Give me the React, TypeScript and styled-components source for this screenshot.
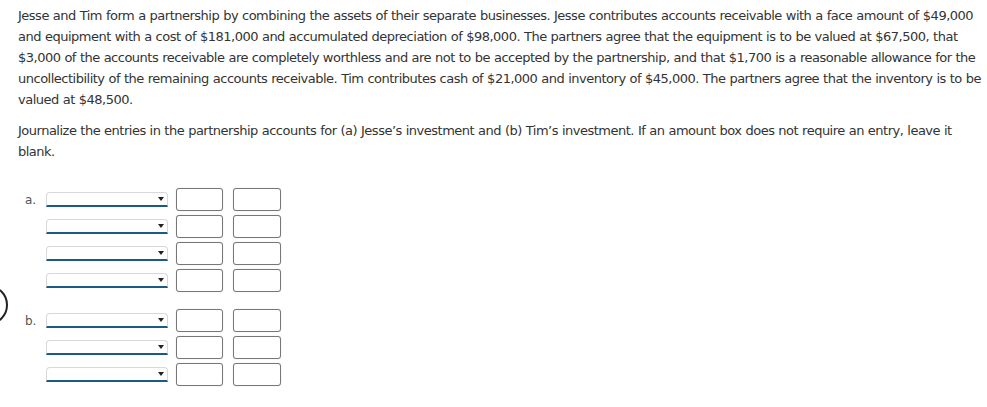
import React from "react";
import styled, { createGlobalStyle } from "styled-components";

const Global = createGlobalStyle`
  html, body { margin: 0; padding: 0; background: #fff; }
  body { font-family: Verdana, "DejaVu Sans", sans-serif; font-size: 13px; color: #333; }
`;

const Page = styled.div`
  position: relative;
  width: 987px;
  height: 407px;
  overflow: hidden;
  box-sizing: border-box;
  padding: 5px 3px 0 18px;
`;

const Para = styled.p`
  margin: 0 0 10px;
  line-height: 21px;
  letter-spacing: -0.5px;
  word-spacing: 0.3px;
`;

const Entries = styled.div`
  display: flex;
  flex-direction: column;
  gap: 17px;
  margin-top: 26px;
`;

const Group = styled.div`
  display: flex;
  flex-direction: column;
  gap: 4px;
`;

const Row = styled.div`
  display: flex;
  align-items: center;
  height: 23px;
`;

const Label = styled.div`
  width: 21px;
  padding-left: 7px;
  color: #555;
  font-size: 12px;
`;

const SelectBox = styled.div`
  position: relative;
  width: 120px;
  height: 12px;
  box-sizing: content-box;
  border: 1px solid #d8d8d8;
  border-bottom: 2px solid #1b5b83;
  border-radius: 4px 4px 0 0;
  background: #fff;
`;

const Arrow = styled.span`
  position: absolute;
  right: 3px;
  top: 4px;
  width: 0;
  height: 0;
  border-left: 3.5px solid transparent;
  border-right: 3.5px solid transparent;
  border-top: 4px solid #222;
`;

const Amount = styled.div<{ $w: number; $ml: number }>`
  width: ${(p) => p.$w}px;
  height: 23px;
  box-sizing: border-box;
  margin-left: ${(p) => p.$ml}px;
  border: 1.5px solid #777;
  border-radius: 3px;
  background: #fff;
  box-shadow: 0 0 1px rgba(0, 0, 0, 0.25);
`;

const NavCircle = styled.div`
  position: absolute;
  left: -32px;
  top: 285px;
  width: 40px;
  height: 40px;
  box-sizing: border-box;
  border: 2.5px solid #222;
  border-radius: 50%;
`;

const EntryRow: React.FC<{ label?: string }> = ({ label }) => (
  <Row>
    <Label>{label ?? ""}</Label>
    <SelectBox>
      <Arrow />
    </SelectBox>
    <Amount $w={47} $ml={8} />
    <Amount $w={48} $ml={10} />
  </Row>
);

export default function App() {
  return (
    <>
      <Global />
      <Page>
        <Para>
          Jesse and Tim form a partnership by combining the assets of their separate businesses. Jesse contributes accounts receivable with a face amount of $49,000 and equipment with a cost of $181,000 and accumulated depreciation of $98,000. The partners agree that the equipment is to be valued at $67,500, that $3,000 of the accounts receivable are completely worthless and are not to be accepted by the partnership, and that $1,700 is a reasonable allowance for the uncollectibility of the remaining accounts receivable. Tim contributes cash of $21,000 and inventory of $45,000. The partners agree that the inventory is to be valued at $48,500.
        </Para>
        <Para>
          Journalize the entries in the partnership accounts for (a) Jesse’s investment and (b) Tim’s investment. If an amount box does not require an entry, leave it blank.
        </Para>
        <Entries>
          <Group>
            <EntryRow label="a." />
            <EntryRow />
            <EntryRow />
            <EntryRow />
          </Group>
          <Group>
            <EntryRow label="b." />
            <EntryRow />
            <EntryRow />
          </Group>
        </Entries>
        <NavCircle />
      </Page>
    </>
  );
}
